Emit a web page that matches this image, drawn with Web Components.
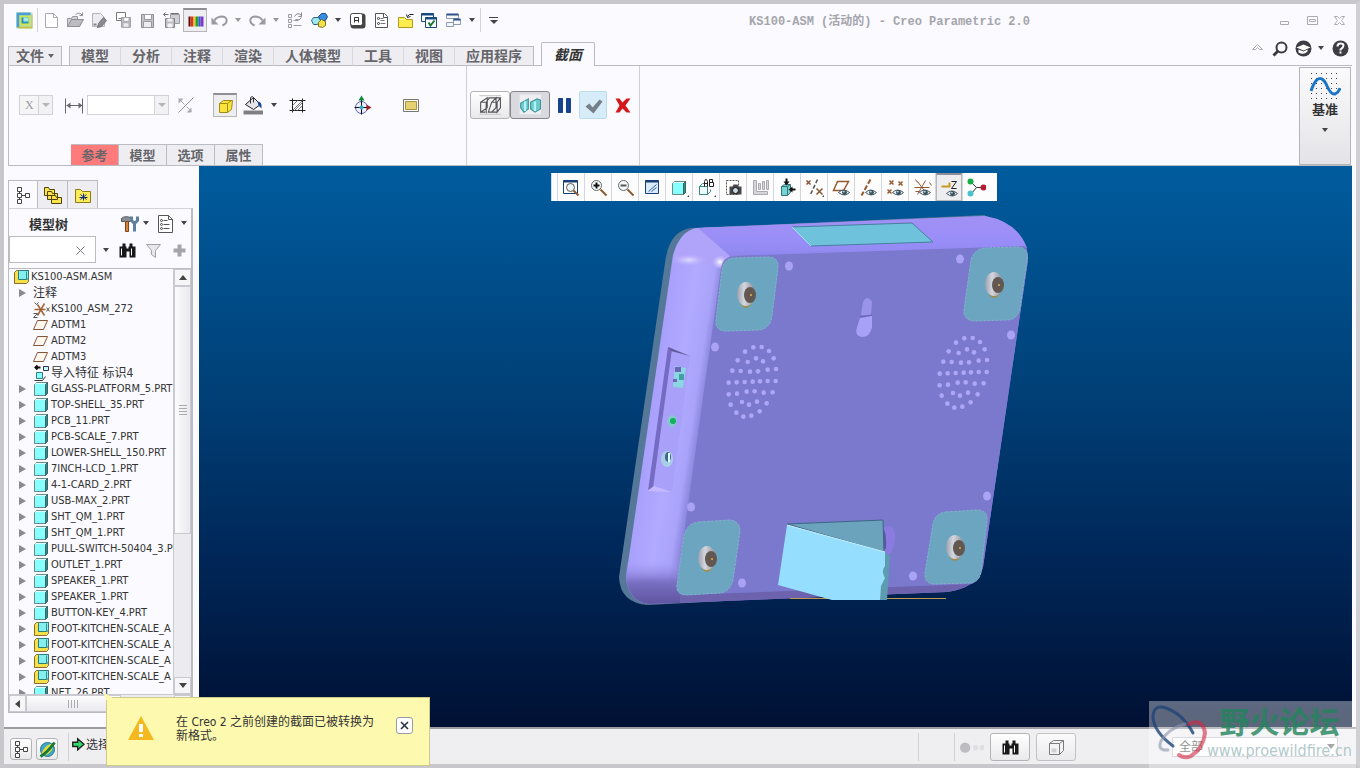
<!DOCTYPE html>
<html lang="zh-CN">
<head>
<meta charset="utf-8">
<title>KS100-ASM (活动的) - Creo Parametric 2.0</title>
<style>
    html, body { height: 100%; }
    body {
        margin: 0;
        overflow: hidden;
        font-family: "DejaVu Sans Condensed", "Noto Sans CJK SC", sans-serif;
        font-size: 11px;
        color: #333;
        --line: #bbbbc2;
        --panel: #fafaff;
        --tab: #eeeef2;
        --cjk: "Liberation Sans", "Noto Sans CJK SC", sans-serif;
    }
</style>
</head>
<body>
<app-window>
    <title-bar slot="title">KS100-ASM (活动的) - Creo Parametric 2.0</title-bar>
    <ribbon-tabs slot="tabs"></ribbon-tabs>
    <ribbon-panel slot="ribbon"></ribbon-panel>
    <model-panel slot="side">
        <tree-item icon="asm" level="0">KS100-ASM.ASM</tree-item>
        <tree-item icon="" level="1" open>注释</tree-item>
        <tree-item icon="csys">KS100_ASM_272</tree-item>
        <tree-item icon="plane">ADTM1</tree-item>
        <tree-item icon="plane">ADTM2</tree-item>
        <tree-item icon="plane">ADTM3</tree-item>
        <tree-item icon="import">导入特征 标识4</tree-item>
        <tree-item icon="part" open>GLASS-PLATFORM_5.PRT</tree-item>
        <tree-item icon="part" open>TOP-SHELL_35.PRT</tree-item>
        <tree-item icon="part" open>PCB_11.PRT</tree-item>
        <tree-item icon="part" open>PCB-SCALE_7.PRT</tree-item>
        <tree-item icon="part" open>LOWER-SHELL_150.PRT</tree-item>
        <tree-item icon="part" open>7INCH-LCD_1.PRT</tree-item>
        <tree-item icon="part" open>4-1-CARD_2.PRT</tree-item>
        <tree-item icon="part" open>USB-MAX_2.PRT</tree-item>
        <tree-item icon="part" open>SHT_QM_1.PRT</tree-item>
        <tree-item icon="part" open>SHT_QM_1.PRT</tree-item>
        <tree-item icon="part" open>PULL-SWITCH-50404_3.PRT</tree-item>
        <tree-item icon="part" open>OUTLET_1.PRT</tree-item>
        <tree-item icon="part" open>SPEAKER_1.PRT</tree-item>
        <tree-item icon="part" open>SPEAKER_1.PRT</tree-item>
        <tree-item icon="part" open>BUTTON-KEY_4.PRT</tree-item>
        <tree-item icon="asm" open>FOOT-KITCHEN-SCALE_A</tree-item>
        <tree-item icon="asm" open>FOOT-KITCHEN-SCALE_A</tree-item>
        <tree-item icon="asm" open>FOOT-KITCHEN-SCALE_A</tree-item>
        <tree-item icon="asm" open>FOOT-KITCHEN-SCALE_A</tree-item>
        <tree-item icon="part" open>NET_26.PRT</tree-item>
    </model-panel>
    <graphics-view slot="view"></graphics-view>
    <status-bar slot="status"></status-bar>
    <notify-balloon slot="over">在 Creo 2 之前创建的截面已被转换为新格式。</notify-balloon>
    <site-mark slot="over"></site-mark>
</app-window>

<script>
// Icon artwork, all on a 20x20 grid
const cube = (x, y) => `<path d="M${x} ${y + 2}l2-2h11v11l-2 2H${x}z" fill="#8ff" stroke="#6a8a8a"/><path d="M${x + 11} ${y + 2}l2-2v11l-2 2z" fill="#2f8f8f" stroke="#3b6464"/><path d="M${x + 1} ${y + 1}h10" stroke="#dff"/>`;
const eye = '<path d="M7 15q5-5 11 0q-5 5-11 0z" fill="#e8eef2" stroke="#4b5a63"/><circle cx="13" cy="15" r="2.4" fill="#35505c"/><circle cx="12.400" cy="14.300" r=".8" fill="#fff"/>';
const floppy = (x, y, s) => `<g transform="translate(${x} ${y}) scale(${s})"><path d="M0 0h12v13H0z" fill="#c4c4c8" stroke="#8d8d92"/><path d="M3 0h7v5H3z" fill="#fff" stroke="#9a9aa0"/><path d="M2 7h8v6H2z" fill="#ededf0" stroke="#9a9aa0"/></g>`;
const box = 'M3 6l4-3h10v10l-4 4H3zM3 6h10v11M13 6l4-3';

const ICONS = {
    app: '<path d="M2 2h16v16H2z" fill="#b9dcd0"/><path d="M2 2h14v3H5v12H2z" fill="#4a9fce"/><path d="M5 5h11v10H5z" fill="#c9e650"/><path d="M7 7h7v6H7z" fill="#2b93b4"/><path d="M9 7h5v4H9z" fill="#a6e8ed"/><path d="M4 16h13V4h1v14H4z" fill="#c3c440"/>',
    new: '<path d="M4 3h8l4 4v10H4z" fill="#fff" stroke="#aaaab0"/><path d="M12 3v4h4" fill="none" stroke="#aaaab0"/>',
    open: '<path d="M2 8h4l1-2h5v3h5l-3 7H2z" fill="#d2d2d6" stroke="#98989e"/><path d="M2 16l4-7h12l-4 7z" fill="#bcbcc1" stroke="#8e8e94"/><path d="M10 4q4-3 7 1m0-3v3h-3" fill="none" stroke="#8e8e94"/>',
    edit: '<path d="M3 3h8l4 4v9H3z" fill="#ececf0" stroke="#b4b4ba"/><path d="M4 14h3" stroke="#888" stroke-width="2"/><path d="M9 13l5-6 3 3-5 6-4 1z" fill="#8c8c92" stroke="#707076"/>',
    copy: '<path d="M3 2h9v8H3z" fill="#fff" stroke="#77777c"/><path d="M5 8h3v3" fill="none" stroke="#77777c"/>' + floppy(8, 7, .75),
    save: floppy(4, 4, 1),
    saveas: '<path d="M2 4h5M4 2l-2 2 2 2M9 3h8v3" fill="none" stroke="#6f6f75"/><path d="M9 4h9v9H9z" fill="#d0d0d4" stroke="#9a9aa0"/><path d="M4 8h9v9H4z" fill="#bdbdc2" stroke="#85858b"/><path d="M6 8h5v3H6zM6 13h5v4H6z" fill="#f4f4f6"/>',
    rainbow: '<path d="M3 5h2v10H3z" fill="#5a0d08"/><path d="M5 5h3v10H5z" fill="#d83422"/><path d="M8 5h2v10H8z" fill="#f0c41d"/><path d="M10 5h3v10h-3z" fill="#28a030"/><path d="M13 5h2v10h-2z" fill="#2c5be0"/><path d="M15 5h3v10h-3z" fill="#8338c8"/>',
    undo: '<path d="M5 10q2-4 8-4q5 1 4 5q0 2-4 4" fill="none" stroke="#9a9aa0" stroke-width="2"/><path d="M2 7v7h7z" fill="#9a9aa0"/>',
    redo: '<path d="M15 10q-2-4-8-4q-5 1-4 5q0 2 4 4" fill="none" stroke="#9a9aa0" stroke-width="2"/><path d="M18 7v7h-7z" fill="#9a9aa0"/>',
    regen: '<path d="M3 4h3v3H3zM3 9h3v3H3zM3 14h3v3H3zM8 10h5M8 15h8" fill="none" stroke="#9a9aa0"/><path d="M9 6q3-5 7-1m0-3v4h-3M16 7q-2 4-6 2" fill="none" stroke="#85858b"/>',
    colour: '<path d="M9 6l3-3h4l2 3-2 4h-5z" fill="#358ce0" stroke="#174c7d"/><path d="M2 10l2-3h5l2 3-3 4H4z" fill="#9ee8f0" stroke="#23667d"/><path d="M9 12l3-3 4 2v4l-3 2-4-1z" fill="#f2e24b" stroke="#827218"/>',
    apart: '<rect x="3" y="3" width="15" height="15" rx="3" fill="#444"/><rect x="3" y="3" width="12" height="12" rx="2" fill="#fff" stroke="#444"/><path d="M7 12V7h4v5M7 10h4" fill="none" stroke="#333"/>',
    list: '<path d="M4 3h9l3 3v11H4z" fill="#fff" stroke="#555"/><path d="M12 3v4h4" fill="none" stroke="#555"/><circle cx="7" cy="8" r="1" fill="none" stroke="#335"/><circle cx="7" cy="13" r="1" fill="none" stroke="#335"/><path d="M9 8h3M9 13h5M9 10h4" stroke="#777"/>',
    folder: '<path d="M3 7h6l2 2h6v8H3z" fill="#fdec50" stroke="#b39c19"/><path d="M4 9h5" stroke="#fffbb4"/><path d="M12 6q1-3 6-2M11 4l1 3 3-1" fill="none" stroke="#222"/>',
    windows: '<path d="M2 3h12v8H2z" fill="#fff" stroke="#174a80"/><path d="M2 4h12" stroke="#174a80" stroke-width="2"/><path d="M6 7h11v10H6z" fill="#fff" stroke="#174a80"/><path d="M6 8h11" stroke="#174a80" stroke-width="2"/><path d="M9 12l2 3 4-5" fill="none" stroke="#157733" stroke-width="2"/>',
    layout: '<path d="M3 4h12v4H3zM3 12h7v4H3zM10 9h7v5h-7z" fill="#f5f7fb" stroke="#8d9bb0"/><path d="M3 4h12M10 9h7" stroke="#2d5087" stroke-width="2"/>',
    min: '<path d="M5 11h8v3H5z" fill="#fff" stroke="#aaaab0"/>',
    max: '<path d="M5 6h10v8H5z" fill="#fff" stroke="#aaaab0"/><path d="M7 9h6v2H7z" fill="#fff" stroke="#aaaab0"/>',
    close: '<path d="M5 6h3l2 2 2-2h3l-3 4 3 4h-3l-2-2-2 2H5l3-4z" fill="#fff" stroke="#aaaab0"/>',
    chevron: '<path d="M5 11l5-5 5 5h-3l-2-2-2 2z" fill="#fff" stroke="#aaaab0"/>',
    search: '<circle cx="11" cy="9" r="5" fill="none" stroke="#3b3b40" stroke-width="2"/><path d="M8 12l-5 5" stroke="#3b3b40" stroke-width="3"/>',
    learn: '<circle cx="10" cy="10" r="8" fill="#3d3d43"/><path d="M3 9l7-3 7 3-7 3z" fill="#fff"/><path d="M5 11v3q5 3 9-1v-2l-4 2z" fill="#fff"/>',
    help: '<circle cx="10" cy="10" r="8" fill="#3d3d43"/><path d="M7 8q0-3 3-3t3 2q0 2-3 4v1" fill="none" stroke="#fff" stroke-width="2"/><path d="M9 13h2v2H9z" fill="#fff"/>',
    measure: '<path d="M1 3v15M18 3v15M2 10h16" stroke="#66666c" fill="none"/><path d="M2 10l4-3v6zM18 10l-4-3v6z" fill="#66666c"/>',
    flip: '<path d="M3 17L18 2" stroke="#8e8e94"/><path d="M3 8V3h5zM16 12v5h-5z" fill="#aaaab0"/><path d="M4 4l5 5M11 11l5 5" stroke="#aaaab0"/>',
    slab: '<path d="M4 7l4-3h9l-1 9-4 3H4z" fill="#f8e43b" stroke="#a38b19"/><path d="M4 7l8 0 4-3M12 7v9" fill="none" stroke="#a38b19"/>',
    paint: '<path d="M2 9l8-7 7 7-7 5z" fill="#e5e5ea" stroke="#222"/><path d="M7 8V2q2-2 3 0v5" fill="none" stroke="#333"/><path d="M14 6q5 0 4 7l-3-3z" fill="#174a9a"/><path d="M0 15h20v4H0z" fill="#808084"/>',
    hatch: '<path d="M5 3v14M15 3v14M2 5h16M2 15h16" stroke="#222"/><path d="M5 10l5-5M5 15L15 5M10 15l5-5M7 15l8-8" stroke="#777"/>',
    axes: '<circle cx="9" cy="12" r="6" fill="#eef" stroke="#5e63ac"/><path d="M9 2v17M2 12h14" stroke="#111"/><path d="M9 0l3 5H6z" fill="#0d8a37"/><path d="M19 12l-5-3v6z" fill="#9a2026"/><circle cx="9" cy="12" r="2" fill="#38a9c4"/>',
    rect: '<path d="M2 4h15v12H2z" fill="#fff" stroke="#777"/><path d="M4 6h11v8H4z" fill="#e6d171" stroke="#aa923a"/>',
    seca: '<path d="M0 1h20M0 18h20" stroke="#cdcdd2"/><path d="M1 7l6-4v9l-6 4zM1 7h5l3-4M6 7v10M8 16l3-9 4-4v9l-4 4zM11 7h5l3-4M16 7v9l3-4V3H8M1 16h4M11 16h5" fill="none" stroke="#55555a"/>',
    secb: '<path d="M0 0h20v18H0z" fill="#eeeef0"/><path d="M1 8l7-4v9l-4 3-3-4z" fill="#6ccbd0" stroke="#41979e"/><path d="M10 7l6-3 3 1v8l-5 3-4-3z" fill="#6ccbd0" stroke="#41979e"/><path d="M5 6v9M14 6v9" stroke="#b4f4f4" stroke-width="2"/>',
    pause: '<path d="M4 3h4v14H4zM12 3h4v14h-4z" fill="#17428c" stroke="#17428c"/>',
    check: '<path d="M2 11l4-3 3 4 7-8 3 2-9 12z" fill="#75808b"/>',
    cancel: '<path d="M3 3h4l3 4 4-4h4l-5 7 5 7h-4l-4-4-3 4H3l4-7z" fill="#d3191c"/>',
    tree: '<path d="M4 2h4v4H4zM4 8h4v4H4zM12 8h4v4h-4zM4 14h4v4H4zM6 6v2M6 12v2M8 10h4" fill="#fff" stroke="#444"/>',
    folders: '<path d="M1 2h4l1 2h5v6H1zM4 6h4l1 2h5v6H4zM8 10h4l1 2h5v6H8z" fill="#fbe44d" stroke="#4d450d"/>',
    star: '<path d="M2 4h5l2 2h8v11H2z" fill="#fdeb58" stroke="#8a7b17"/><path d="M10 8v7M7 9l6 5M13 9l-6 5M6 12h8" stroke="#102a87"/>',
    tools: '<path d="M2 5q3-3 9-1v4H8l-3 0H2z" fill="#888e96" stroke="#555"/><path d="M6 8h3v10H6z" fill="#d7833c" stroke="#81431b"/><path d="M12 3v4l2 2h2l2-2V3M15 8v10" fill="none" stroke="#5f7f9c" stroke-width="3"/>',
    tlist: '<path d="M3 2h10l4 4v13H3z" fill="#fff" stroke="#555"/><path d="M13 2v4h4M8 7h4M8 11h6M8 15h6" fill="none" stroke="#555"/><circle cx="6" cy="7" r="1" fill="none" stroke="#444"/><circle cx="6" cy="11" r="1" fill="none" stroke="#444"/><circle cx="6" cy="15" r="1" fill="none" stroke="#444"/>',
    find: '<path d="M2 6h3V3h3v3h1v2h2V6h1V3h3v3h3v11h-6v-6H9v6H2z" fill="#181818"/><path d="M4 8v7M14 8v7" stroke="#fff"/>',
    filter: '<path d="M3 4h14l-5 6v7l-4-3v-4z" fill="#e8e8ec" stroke="#a0a0a6"/>',
    plus: '<path d="M8 4h4v4h4v4h-4v4H8v-4H4V8h4z" fill="#a4a4aa"/>',
    x: '<path d="M6 6l8 8M14 6l-8 8" stroke="#77777c"/>',
    part: cube(2, 3),
    asm: '<path d="M2 5l2-2h12v11l-2 2H2z" fill="#f3e04a" stroke="#8d6b28"/><path d="M6 4l1-1h9v8l-2 1H6z" fill="#83efef" stroke="#2d7d7d"/><path d="M14 4v8" stroke="#2f8f8f"/>',
    plane: '<path d="M5 5h10l-4 9H1z" fill="#fff6ee" stroke="#85553a"/>',
    csys: '<path d="M2 10h11M5 5l7 11M12 4L5 16" stroke="#a16536" stroke-width="1.500"/><path d="M2 3l2 2 2-2M1 14h4l-4 4h4M14 8l3 4M17 8l-3 4" fill="none" stroke="#555"/>',
    import: '<path d="M11 3h5v4h-5z" fill="#c6fafa" stroke="#335"/><path d="M4 9h6v6H4z" fill="#8ff" stroke="#2d7d7d"/><path d="M2 17h8l3-4" fill="none" stroke="#333"/><path d="M3 4h5M5 2L3 4l2 2" fill="none" stroke="#111" stroke-width="2"/>',
    vfit: '<path d="M2 3h14v13H2z" fill="#fff" stroke="#163f78"/><path d="M2 4h14" stroke="#163f78" stroke-width="2"/><circle cx="9" cy="10" r="4" fill="#eef6fa" stroke="#555"/><path d="M12 13l5 5" stroke="#8c5930" stroke-width="2"/>',
    vin: '<circle cx="8" cy="8" r="5" fill="#f6fbfd" stroke="#666"/><path d="M5 8h6M8 5v6" stroke="#111" stroke-width="2"/><path d="M12 12l6 6" stroke="#8c5930" stroke-width="2"/>',
    vout: '<circle cx="8" cy="8" r="5" fill="#f6fbfd" stroke="#666"/><path d="M5 8h6" stroke="#555" stroke-width="2"/><path d="M12 12l6 6" stroke="#8c5930" stroke-width="2"/>',
    vpaint: '<path d="M3 3h13v13H3z" fill="#dcebfa" stroke="#163f78"/><path d="M3 4h13" stroke="#163f78" stroke-width="2"/><path d="M6 14l8-7M9 14l5-4" stroke="#305f9c"/>',
    vbox: cube(3, 4) + '<path d="M20 17v3h-3z" fill="#444"/>',
    vab: '<path d="M3 17V9l3-3h3M3 9h8v8H3zM11 17l3-3v-2" fill="#effcfc" stroke="#3c8787"/><path d="M8 9V4l1-2h1l1 2v5M8 6h3M13 2h3v3h-3zM13 5h4v4h-4z" fill="none" stroke="#222"/><path d="M20 17v3h-3z" fill="#444"/>',
    vcam: '<path d="M3 3h12v14H3z" fill="#fff" stroke="#555" stroke-dasharray="2 1"/><path d="M6 9h3l1-2h4l1 2h3v8H6z" fill="#47474b"/><circle cx="12" cy="13" r="3" fill="#c9d9e2" stroke="#111"/>',
    vbars: '<path d="M3 3v14h14v-3H6V3zM8 6h2v6H8zM12 4h2v8h-2zM16 3h2v9h-2z" fill="#d5d5da" stroke="#a9a9af"/>',
    vrot: '<path d="M4 9l3-2h6v8l-3 3H4z" fill="#75d3d3" stroke="#367575"/><path d="M4 9h6v9M10 9l3-2" fill="none" stroke="#367575"/><path d="M9 1v5M18 12h-5" stroke="#111" stroke-width="2"/><path d="M6 4h6L9 8zM15 9v6l-4-3z" fill="#111"/>',
    vx: '<path d="M2 3l4 4M6 3L2 7M12 11l6 6M18 11l-6 6" stroke="#8a5530" stroke-width="1.500"/><path d="M13 2L6 17" stroke="#555" stroke-width="1.500" stroke-dasharray="4 2"/><path d="M20 17v3h-3z" fill="#444"/>',
    vplane: '<path d="M6 4h11l-5 9H2z" fill="#fff" stroke="#955a32" stroke-width="1.500"/>' + eye,
    vaxis: '<path d="M12 2L3 18" stroke="#955a32" stroke-width="2" stroke-dasharray="5 2"/>' + eye,
    vpts: '<path d="M4 3l4 4M8 3L4 7M13 4l4 4M17 4l-4 4M2 12l4 4M6 12l-4 4" stroke="#955a32" stroke-width="1.500"/>' + eye,
    vcsys: '<path d="M2 10h15M5 4l9 12M13 3L5 17M3 2l2 3M17 5l2 3M3 14h4" stroke="#955a32"/>' + eye,
    vnote: '<path d="M2 8h8V4" fill="none" stroke="#c99a21" stroke-width="2"/><path d="M12 3h5l-5 7h5" fill="none" stroke="#222"/>' + eye,
    vspin: '<path d="M4 4l6 6h7M10 10l-5 6" fill="none" stroke="#333"/><circle cx="4" cy="4" r="3" fill="#16ad46"/><circle cx="17" cy="10" r="3" fill="#b91b33"/><circle cx="4" cy="16" r="3" fill="#4bc0d1"/>',
    globe: '<circle cx="10" cy="10" r="7" fill="#3fa9c7" stroke="#2a7283"/><path d="M4 14Q8 4 16 4q0 9-9 12z" fill="#e8d93d"/><path d="M3 17Q10 13 17 3" fill="none" stroke="#157a39" stroke-width="3"/>',
    go: '<path d="M2 7h7V2l9 8-9 8v-5H2z" fill="#33d96b" stroke="#222" stroke-width="2"/>',
    dots: '<circle cx="5" cy="10" r="4" fill="#bdbdc1"/><circle cx="13" cy="10" r="2" fill="#dedee2"/><circle cx="18" cy="10" r="2" fill="#dedee2"/>',
    wire: `<path d="${box}" fill="#f6f6f8" stroke="#555"/><path d="M5 11h5v4H5z" fill="#c6c6ca"/>`,
};

// Registers an element whose shadow root is cloned from the given markup.
// setup runs on connect and again when the icon name changes.
function define(tag, html, setup) {
    const template = document.createElement('template');
    template.innerHTML = html;
    customElements.define(tag, class extends HTMLElement {
        static get observedAttributes() { return ['name']; }
        constructor() {
            super();
            this.attachShadow({ mode: 'open' }).appendChild(template.content.cloneNode(true));
        }
        connectedCallback() {
            if (setup) setup(this, this.shadowRoot);
        }
        attributeChangedCallback() {
            if (setup && this.isConnected) setup(this, this.shadowRoot);
        }
    });
}

// the half-unit origin keeps one-pixel strokes sharp
define('ui-icon', `
    <style>
        :host { display: inline-block; flex: none; width: 20px; height: 20px; }
        svg { display: block; width: 100%; height: 100%; }
    </style>
    <svg viewBox="-.5 -.5 20 20" aria-hidden="true"></svg>
`, (el, root) => {
    root.querySelector('svg').innerHTML = ICONS[el.getAttribute('name')] || '';
});

define('tool-button', `
    <style>
        :host { display: block; flex: none; width: 24px; height: 24px; }
        button {
            display: flex; align-items: center; justify-content: center;
            box-sizing: border-box; width: 100%; height: 100%;
            margin: 0; padding: 0; border: 1px solid transparent; background: none;
        }
        ui-icon { width: var(--icon-size, 20px); height: var(--icon-size, 20px); }
        :host([pressed]) button {
            border-color: #b5b5ba; border-top: 2px solid #8f8f96; background: #eeeef1;
        }
        :host([raised]) button {
            border-color: #b4b4b8; border-radius: 3px;
            background: linear-gradient(#fff, #e9e9ec);
        }
        :host([raised][pressed]) button { border: 1px solid #85858b; background: #d9d9df; }
    </style>
    <button type="button"><ui-icon></ui-icon></button>
`, (el, root) => {
    root.querySelector('ui-icon').setAttribute('name', el.getAttribute('icon'));
    root.querySelector('button').setAttribute('aria-label', el.getAttribute('icon'));
});

define('drop-arrow', `
    <style>
        :host { display: flex; flex: none; width: 14px; height: 20px; }
        button { width: 100%; padding: 0; border: 0; background: none; display: flex; align-items: center; justify-content: center; }
        i { border: 3px solid transparent; border-top: 4px solid #444; border-bottom: 0; }
        :host([dim]) i { border-top-color: #999; }
    </style>
    <button type="button" aria-label="more"><i></i></button>
`);

define('app-window', `
    <style>
        :host {
            position: relative;
            display: flex; flex-direction: column;
            box-sizing: border-box; height: 100vh;
            border: 4px solid #c7c7cc;
            border-right-color: #cfcfd4;
            background: var(--panel);
            box-shadow: inset 1px 1px #fff;
        }
        main { display: flex; flex: 1; min-height: 0; padding: 0 4px; }
    </style>
    <slot name="title"></slot>
    <slot name="tabs"></slot>
    <slot name="ribbon"></slot>
    <main><slot name="side"></slot><slot name="view"></slot></main>
    <slot name="status"></slot>
    <slot name="over"></slot>
`);

define('title-bar', `
    <style>
        :host { display: flex; align-items: center; height: 32px; padding: 0 5px 0 8px; }
        .sep { width: 1px; height: 24px; margin: 0 1px; background: #d2d2d8; }
        h1 {
            flex: 1; margin: 0; text-align: center; white-space: nowrap;
            font: bold 12px "Liberation Mono", "Noto Sans CJK SC", monospace; color: #a5a5ab;
        }
        .more { border-top: 1px solid #444; width: 9px; margin: 0 8px 0 7px; display: flex; justify-content: center; padding-top: 2px; }
        .more i { border: 4px solid transparent; border-top-color: #444; border-bottom: 0; }
        .win { display: flex; gap: 3px; }
    </style>
    <tool-button icon="app"></tool-button>
    <span class="sep"></span>
    <tool-button icon="new"></tool-button>
    <tool-button icon="open"></tool-button>
    <tool-button icon="edit"></tool-button>
    <tool-button icon="copy"></tool-button>
    <tool-button icon="save"></tool-button>
    <tool-button icon="saveas"></tool-button>
    <tool-button icon="rainbow" pressed></tool-button>
    <tool-button icon="undo"></tool-button>
    <drop-arrow dim></drop-arrow>
    <tool-button icon="redo"></tool-button>
    <drop-arrow dim></drop-arrow>
    <tool-button icon="regen"></tool-button>
    <tool-button icon="colour"></tool-button>
    <drop-arrow></drop-arrow>
    <tool-button icon="apart"></tool-button>
    <tool-button icon="list"></tool-button>
    <tool-button icon="folder"></tool-button>
    <tool-button icon="windows"></tool-button>
    <tool-button icon="layout"></tool-button>
    <drop-arrow></drop-arrow>
    <span class="sep"></span>
    <span class="more"><i></i></span>
    <h1><slot></slot></h1>
    <div class="win">
        <tool-button icon="min"></tool-button>
        <tool-button icon="max"></tool-button>
        <tool-button icon="close"></tool-button>
    </div>
`);

define('ribbon-tabs', `
    <style>
        :host {
            display: flex; align-items: flex-end; height: 30px; padding: 0 4px;
            font-family: var(--cjk); font-size: 14px; font-weight: bold; color: #65656a;
        }
        button {
            box-sizing: border-box; height: 20px; padding: 0 11px;
            border: 1px solid #d8d8de; border-width: 1px 1px 1px 0; border-top-color: var(--line); border-bottom-color: var(--line);
            background: var(--tab); font: inherit; line-height: 18px; color: inherit; white-space: nowrap;
        }
        .file { display: flex; align-items: center; padding: 0 7px; border-color: var(--line); border-left-width: 1px; }
        .file i { margin-left: 4px; border: 3px solid transparent; border-top: 4px solid #65656a; border-bottom: 0; }
        .gap { width: 7px; height: 20px; box-sizing: border-box; border-bottom: 1px solid var(--line); }
        .first { border-left: 1px solid var(--line); }
        .last { border-right-color: var(--line); }
        .active {
            height: 24px; padding: 0 12px; color: #333; font-style: italic; line-height: 22px;
            border: 1px solid var(--line); border-bottom: 0; background: var(--panel); border-radius: 2px 2px 0 0;
        }
        .rest { display: flex; flex: 1; height: 29px; justify-content: flex-end; align-items: center; border-bottom: 1px solid var(--line); padding-right: 2px; gap: 3px; }
        .rest ui-icon { margin-bottom: 5px; }
        .rest drop-arrow { margin: 0 -1px 6px -2px; }
    </style>
    <button type="button" class="file">文件<i></i></button>
    <span class="gap"></span>
    <button type="button" class="first">模型</button>
    <button type="button">分析</button>
    <button type="button">注释</button>
    <button type="button">渲染</button>
    <button type="button">人体模型</button>
    <button type="button">工具</button>
    <button type="button">视图</button>
    <button type="button" class="last">应用程序</button>
    <span class="gap"></span>
    <button type="button" class="active">截面</button>
    <div class="rest">
        <ui-icon name="chevron"></ui-icon>
        <ui-icon name="search"></ui-icon>
        <ui-icon name="learn"></ui-icon>
        <drop-arrow></drop-arrow>
        <ui-icon name="help"></ui-icon>
    </div>
`);

define('ribbon-panel', `
    <style>
        :host {
            display: flex; height: 99px; margin: 0 4px;
            border-left: 1px solid var(--line); border-bottom: 1px solid var(--line);
            font-family: var(--cjk); font-weight: bold; color: #65656a;
        }
        .group { display: flex; flex-direction: column; border-right: 1px solid #d0d0d6; }
        .row { display: flex; align-items: center; height: 78px; }
        .tools { padding: 0 45px 0 10px; }
        select, .combo {
            display: flex; box-sizing: border-box; height: 20px; margin: 0; padding: 0;
            border: 1px solid #d2d2d8; background: #fff; border-radius: 0;
        }
        .axis { position: relative; width: 34px; margin-right: 11px; }
        .axis select {
            width: 100%; appearance: none; opacity: 1; padding-left: 5px;
            font: 12px "Liberation Serif", serif; color: #9a9aa0; background: #f5f5f8;
        }
        .axis i, .combo button { box-sizing: border-box; width: 14px; border: 0; border-left: 1px solid #d2d2d8; background: #f2f2f5; padding: 0; display: flex; align-items: center; justify-content: center; }
        .axis i { position: absolute; right: 1px; top: 1px; bottom: 1px; }
        .axis i::after, .combo button::after { content: ""; border: 4px solid transparent; border-top-color: #b5b5ba; border-bottom: 0; }
        .combo { width: 82px; margin: 0 6px 0 3px; }
        .combo input { flex: 1; min-width: 0; border: 0; padding: 0 4px; background: #fff; }
        .slab { margin: 0 6px 0 18px; }
        .hatch { margin: 0 43px 0 4px; }
        .axes { margin-right: 29px; }
        .paint { margin-right: 4px; }
        .tabs { display: flex; height: 21px; margin-left: 62px; }
        .tabs button {
            box-sizing: border-box; width: 48px; padding: 0; border: 1px solid var(--line); border-left-width: 0;
            border-bottom: 0; background: var(--tab); font: inherit; font-size: 13px; line-height: 19px; color: inherit;
        }
        .tabs .warn { background: #ff7b7b; }
        .confirm { padding: 0 7px 0 3px; }
        .confirm .wide { width: 40px; height: 28px; --icon-size: 22px; }
        .pause { margin: 0 5px 0 4px; }
        .ok { display: flex; align-items: center; justify-content: center; width: 28px; height: 28px; box-sizing: border-box; margin-right: 5px; padding: 0; border: 1px solid #b9dcec; border-radius: 2px; background: #d6ecf8; }
        .datum {
            display: flex; flex-direction: column; align-items: center; width: 52px; margin: 1px 1px 0 auto; padding: 4px 0 0;
            border: 1px solid #b4b4ba; background: linear-gradient(#fafafc, #e4e4e8); font: inherit; font-size: 13px; line-height: 16px; color: #333;
        }
        .datum svg { width: 32px; height: 30px; }
        .datum drop-arrow { margin-top: 2px; }
    </style>
    <div class="group">
        <div class="row tools">
            <span class="axis"><select disabled aria-label="axis"><option>X</option></select><i></i></span>
            <ui-icon name="measure"></ui-icon>
            <span class="combo"><input type="text" aria-label="offset"><button type="button" aria-label="list"></button></span>
            <ui-icon name="flip"></ui-icon>
            <tool-button class="slab" icon="slab" pressed></tool-button>
            <ui-icon name="paint" class="paint"></ui-icon>
            <drop-arrow></drop-arrow>
            <tool-button icon="hatch" class="hatch"></tool-button>
            <ui-icon name="axes" class="axes"></ui-icon>
            <ui-icon name="rect"></ui-icon>
        </div>
        <div class="tabs">
            <button type="button" class="warn">参考</button>
            <button type="button">模型</button>
            <button type="button">选项</button>
            <button type="button">属性</button>
        </div>
    </div>
    <div class="group">
        <div class="row confirm">
            <tool-button class="wide" icon="seca" raised></tool-button>
            <tool-button class="wide" icon="secb" raised pressed></tool-button>
            <ui-icon name="pause" class="pause"></ui-icon>
            <button type="button" class="ok" aria-label="ok"><ui-icon name="check"></ui-icon></button>
            <ui-icon name="cancel"></ui-icon>
        </div>
    </div>
    <button type="button" class="datum">
        <svg viewBox="0 0 32 30"><g class="grid"></g><path d="M2 19Q7 4 13 7q3 2 5 7q4 9 8 8q4-2 5-6" fill="none" stroke="#1c74c4" stroke-width="3"/></svg>
        <span>基准</span>
        <drop-arrow></drop-arrow>
    </button>
`, (el, root) => {
    let dots = '';
    for (let y = 1; y < 30; y += 5) {
        for (let x = 2; x < 32; x += 5) dots += `<rect x="${x}" y="${y}" width="1" height="1" fill="#444"/>`;
    }
    root.querySelector('.grid').innerHTML = dots;
});

define('tree-item', `
    <style>
        :host { display: flex; align-items: center; height: 16px; padding-left: 10px; white-space: nowrap; line-height: 16px; }
        i { flex: none; width: 0; height: 0; border: 4px solid transparent; border-left: 7px solid #8a8a8f; border-right: 0; margin-right: 6px; visibility: hidden; }
        :host([open]) i { visibility: visible; }
        :host([level="0"]) { padding-left: 3px; }
        :host([level="0"]) i, :host([level="1"]) ui-icon { display: none; }
        ui-icon { margin: -2px -2px -2px 0; }
        .label { padding-left: 1px; font-family: "DejaVu Sans Condensed", "Noto Sans CJK SC", sans-serif; }
        .cjk { font-size: 12px; }
    </style>
    <i></i><ui-icon></ui-icon><span class="label"><slot></slot></span>
`, (el, root) => {
    root.querySelector('ui-icon').setAttribute('name', el.getAttribute('icon'));
    if (/[\u4e00-\u9fff]/.test(el.textContent)) root.querySelector('.label').classList.add('cjk');
});

define('model-panel', `
    <style>
        :host { display: flex; flex-direction: column; width: 191px; flex: none; padding: 14px 0 14px; box-sizing: border-box; }
        .tabs { display: flex; }
        .tabs button {
            display: flex; align-items: center; justify-content: center; box-sizing: border-box; width: 30px; height: 28px; padding: 0;
            border: 1px solid var(--line); border-left-width: 0; border-bottom: 0; background: var(--tab);
        }
        .tabs .on { background: var(--panel); border-left-width: 1px; }
        .body { display: flex; flex-direction: column; flex: 1; min-height: 0; width: 185px; box-sizing: border-box; border: 1px solid var(--line); border-right-width: 2px; border-top-color: #d3d3d9; }
        .head, .find { display: flex; align-items: center; }
        .head { height: 28px; padding-left: 20px; }
        h2 { flex: 1; margin: 0; font: bold 13px var(--cjk); color: #333; }
        .find { height: 25px; margin-bottom: 6px; }
        .box { display: flex; align-items: center; box-sizing: border-box; width: 87px; height: 27px; border: 1px solid var(--line); background: #fff; padding-right: 5px; }
        .box input { flex: 1; min-width: 0; border: 0; outline: 0; background: none; }
        .find > drop-arrow { margin: 0 4px 0 3px; }
        .find > .gap { margin: 0 6px; }
        .tree { display: flex; flex: 1; min-height: 0; border-top: 1px solid var(--line); }
        .items { flex: 1; min-width: 0; overflow: hidden; }
        .bar { display: flex; background: #ececf0; }
        .bar button { flex: none; display: flex; align-items: center; justify-content: center; width: 17px; height: 17px; padding: 0; border: 1px solid #c9c9cf; background: #f6f6f9; box-sizing: border-box; }
        .bar button::after { content: ""; border: 4px solid transparent; }
        .up::after { border-bottom: 5px solid #444 !important; border-top: 0 !important; }
        .down::after { border-top: 5px solid #444 !important; border-bottom: 0 !important; }
        .left::after { border-right: 5px solid #444 !important; border-left: 0 !important; }
        .right::after { border-left: 5px solid #444 !important; border-right: 0 !important; }
        .vert { flex-direction: column; width: 17px; border-left: 1px solid #c9c9cf; }
        .thumb { display: flex; align-items: center; justify-content: center; box-sizing: border-box; border: 1px solid #c9c9cf; background: linear-gradient(90deg, #fcfcfe, #e9e9ee); }
        .vert .thumb { flex: 62; }
        .vert .space { flex: 36; }
        .vert .thumb::after { content: ""; width: 8px; height: 10px; background: repeating-linear-gradient(#aaaab0 0 1px, transparent 1px 3px); }
        .hor { height: 17px; border-top: 1px solid #c9c9cf; }
        .hor .thumb { width: 95px; background: linear-gradient(#fcfcfe, #e9e9ee); }
        .hor .thumb::after { content: ""; width: 11px; height: 8px; background: repeating-linear-gradient(90deg, #aaaab0 0 1px, transparent 1px 3px); }
        .hor .space { flex: 1; }
    </style>
    <div class="tabs">
        <button type="button" class="on" aria-label="tree"><ui-icon name="tree"></ui-icon></button>
        <button type="button" aria-label="folders"><ui-icon name="folders"></ui-icon></button>
        <button type="button" aria-label="favorites"><ui-icon name="star"></ui-icon></button>
    </div>
    <div class="body">
        <div class="head">
            <h2>模型树</h2>
            <ui-icon name="tools"></ui-icon><drop-arrow></drop-arrow>
            <tool-button icon="tlist"></tool-button><drop-arrow></drop-arrow>
        </div>
        <div class="find">
            <span class="box"><input type="text" aria-label="find"><ui-icon name="x"></ui-icon></span>
            <drop-arrow></drop-arrow>
            <ui-icon name="find"></ui-icon>
            <ui-icon name="filter" class="gap"></ui-icon>
            <ui-icon name="plus"></ui-icon>
        </div>
        <div class="tree">
            <div class="items"><slot></slot></div>
            <div class="bar vert">
                <button type="button" class="up" aria-label="up"></button>
                <span class="thumb"></span><span class="space"></span>
                <button type="button" class="down" aria-label="down"></button>
            </div>
        </div>
        <div class="bar hor">
            <button type="button" class="left" aria-label="left"></button>
            <span class="thumb"></span><span class="space"></span>
            <button type="button" class="right" aria-label="right"></button>
        </div>
    </div>
`);

define('view-toolbar', `
    <style>
        :host { display: flex; height: 28px; padding: 0 8px 0 5px; box-sizing: border-box; background: #fdfdfe; border-left: 1px solid #cde; }
        tool-button { width: 27px; height: 28px; box-sizing: border-box; border-left: 1px solid #d3d6dc; }
    </style>
`, (el, root) => {
    for (const name of ['vfit', 'vin', 'vout', 'vpaint', 'vbox', 'vab', 'vcam', 'vbars', 'vrot', 'vx', 'vplane', 'vaxis', 'vpts', 'vcsys', 'vnote', 'vspin']) {
        const b = document.createElement('tool-button');
        b.setAttribute('icon', name);
        if (name === 'vnote') b.setAttribute('pressed', '');
        root.appendChild(b);
    }
});

define('graphics-view', `
    <style>
        :host {
            position: relative; flex: 1; min-width: 0; display: flex; justify-content: center; align-items: flex-start;
            padding-top: 7px; padding-right: 4px; box-sizing: border-box;
            background: linear-gradient(#005c9e, #004077 40%, #00285a 68%, #001033);
        }
        svg { position: absolute; left: 0; top: 0; width: 100%; height: 100%; }
        view-toolbar { position: relative; }
    </style>
    <svg viewBox="199 166 1153 561" preserveAspectRatio="xMidYMid slice">
        <defs>
            <linearGradient id="side" gradientUnits="userSpaceOnUse" x1="646" y1="400" x2="706" y2="409">
                <stop offset="0" stop-color="#a69dfb"/><stop offset=".5" stop-color="#b1aaff"/><stop offset=".8" stop-color="#a9a3fa"/><stop offset="1" stop-color="#7f7cd2"/>
            </linearGradient>
            <linearGradient id="top" x1="0" y1="0" x2="0" y2="1">
                <stop offset="0" stop-color="#a191f5"/><stop offset=".6" stop-color="#988df8"/><stop offset="1" stop-color="#8a83e6"/>
            </linearGradient>
            <linearGradient id="low" x1="0" y1="0" x2="0" y2="1">
                <stop offset="0" stop-color="#a69dfb" stop-opacity="0"/><stop offset=".5" stop-color="#7a70c4"/><stop offset="1" stop-color="#5e549f"/>
            </linearGradient>
            <radialGradient id="shine"><stop offset="0" stop-color="#fff"/><stop offset="1" stop-color="#c9beff" stop-opacity="0"/></radialGradient>
            <linearGradient id="metal"><stop offset="0" stop-color="#9aa1ae"/><stop offset=".4" stop-color="#d4d7df"/><stop offset="1" stop-color="#8a8b98"/></linearGradient>
        </defs>
        <!-- back shell and body -->
        <path d="M692 228L985 215L990 400L800 597L648 605Q620 603 619 577L665 263Q669 230 692 228z" fill="#557899"/>
        <path d="M698 228L985 216Q1018 222 1027 250L1028 260L983 567Q977 588 947 592L648 604Q628 601 626 577L673 255Q680 230 698 228z" fill="url(#side)"/>
        <path d="M698 228L985 216Q1018 222 1027 248L733 256L716 262z" fill="url(#top)"/>
        <path d="M698 228Q680 230 673 258L721 268L730 256z" fill="#b0a3fa"/>
        <ellipse cx="689" cy="260" rx="18" ry="6" fill="url(#shine)" opacity=".6"/>
        <ellipse cx="720" cy="262" rx="8" ry="7" fill="url(#shine)"/>
        <path d="M676 592L983 567Q977 588 947 592L676 603z" fill="#6c62ae"/>
        <path d="M627 562L680 560V603L648 604Q628 601 626 577z" fill="url(#low)"/>
        <path d="M733 256L1025 246Q1028 250 1028 260L983 567Q980 580 972 584L684 595Q676 595 677 585L721 268Q723 257 733 256z" fill="#7b79cd"/>
        <path d="M792 227L912 223L933 242L811 246z" fill="#6fc2dc" stroke="#487f9e"/>
        <path d="M792 227L811 246" stroke="#9ee5f2"/>
        <!-- foot pads -->
        <g fill="#6ca5bf" stroke="#7fb2cb" stroke-dasharray="3 1">
            <path d="M735 258L768 257Q779 257 778 268L772 316Q770 329 759 330L726 331Q715 331 716 320L722 270Q724 258 735 258z"/>
            <path d="M985 248L1018 247Q1029 248 1027 260L1020 308Q1018 320 1006 320L974 321Q963 320 964 310L971 260Q974 249 985 248z"/>
            <path d="M699 522L730 520Q740 521 740 531L733 580Q730 592 720 593L687 595Q676 595 677 585L684 536Q687 523 699 522z"/>
            <path d="M946 512L977 510Q988 510 987 521L981 572Q979 583 969 583L935 584Q924 584 925 573L933 524Q935 513 946 512z"/>
        </g>
        <g class="knobs"></g>
        <g class="screws" fill="#aaa3f5"></g>
        <g class="holes" fill="#aea7f8"></g>
        <!-- keyhole -->
        <path d="M861 315L863 302Q867 294 872 302L871 316z" fill="#9a93ea"/>
        <path d="M860 318L872 316V327Q870 337 862 337Q854 336 857 327z" fill="#a8a1f8"/>
        <path d="M860 317L872 315" stroke="#6360a8"/>
        <!-- side connectors -->
        <path d="M668 347L690 356L672 492L648 490z" fill="#a8a0f9"/>
        <path d="M668 347L672 349L653 488L648 491z" fill="#756bc2"/>
        <path d="M668 347L690 356L671 351z" fill="#625a9d"/>
        <path d="M647 491L654 486L672 492z" fill="#c4b9ff"/>
        <path d="M675 366L686 368L683 388L673 387z" fill="#8cd6e2"/>
        <path d="M675 367h6v5h-6zM673 379h4v3h-4z" fill="#6b66b5"/>
        <path d="M679 374h5v6h-5z" fill="#419fa6"/>
        <ellipse cx="672" cy="421" rx="5" ry="6" fill="#8ac5d4"/><circle cx="673" cy="421" r="3" fill="#12b35c"/>
        <ellipse cx="667" cy="459" rx="6" ry="8" fill="#a9cfe6"/><ellipse cx="668" cy="457" rx="3" ry="5" fill="#44658c"/><path d="M669 453v9" stroke="#dff" stroke-width="2"/>
        <!-- stand -->
        <path d="M790 598.500H946" stroke="#c29a4b"/>
        <path d="M883 528Q896 522 895 540Q892 556 884 558z" fill="#8b7be0"/><path d="M883 528Q887 534 886 548L883 552z" fill="#5d55a2"/>
        <path d="M787 524L883 520L884 552z" fill="#6ba3bd" stroke="#3b6785"/>
        <path d="M885 552L890 556L887 600L878 600z" fill="#5d9cb0"/>
        <path d="M787 525L885 552L885 566Q881 571 885 578L881 586L880 600H832L778 585z" fill="#95defe"/>
        <path d="M787 525L885 552" stroke="#c5f1ff"/>
    </svg>
    <view-toolbar></view-toolbar>
`, (el, root) => {
    const knobs = [[747, 294], [995, 284], [708, 558], [956, 547]];
    root.querySelector('.knobs').innerHTML = knobs.map(([x, y]) => `
        <ellipse cx="${x - 1}" cy="${y + 3}" rx="7" ry="11" fill="#a08e4c"/>
        <ellipse cx="${x - 1}" cy="${y}" rx="9" ry="12" fill="url(#metal)"/>
        <ellipse cx="${x + 3}" cy="${y + 1}" rx="6" ry="8" fill="#625851"/>
        <circle cx="${x + 4}" cy="${y + 1}" r="1" fill="#e3b04a"/>`).join('');

    const screws = [[789, 266], [960, 259], [1011, 335], [715, 347], [691, 507], [742, 583], [913, 576], [987, 496]];
    root.querySelector('.screws').innerHTML = screws.map(([x, y]) => `<ellipse cx="${x}" cy="${y}" rx="4" ry="4.500"/>`).join('');

    // speaker grille, repeated for both sides
    const holes = [[460, 442], [485, 441], [435, 455], [507, 453], [413, 481], [443, 486], [468, 475], [489, 484], [521, 475],
        [397, 512], [422, 513], [450, 515], [474, 514], [503, 509], [528, 507],
        [386, 548], [410, 547], [434, 546], [458, 545], [480, 544], [503, 543], [527, 543],
        [386, 583], [411, 581], [440, 575], [464, 574], [491, 578], [518, 577],
        [392, 614], [426, 606], [447, 614], [471, 605], [500, 610], [409, 638], [430, 650], [454, 647], [479, 634]];
    root.querySelector('.holes').innerHTML = [[600, 200], [811, 191]].map(([dx, dy]) =>
        holes.map(([x, y]) => `<circle cx="${dx + x / 3}" cy="${dy + y / 3}" r="2.300"/>`).join('')).join('');
});

define('status-bar', `
    <style>
        :host {
            display: flex; align-items: center; flex: none; height: 37px; box-sizing: border-box; padding: 0 18px 0 6px;
            border-top: 2px solid #9c9ca2; background: #efeff2;
        }
        .small { width: 22px; height: 22px; margin: 4px 4px 0 0; border: 0; }
        .sep { width: 1px; height: 28px; background: #d0d0d6; }
        .msg { display: flex; align-items: center; flex: 1; margin: 0 0 6px 2px; font: 12px var(--cjk); color: #333; }
        .msg ui-icon { width: 14px; height: 14px; margin-right: 1px; }
        .first { margin-left: 6px; }
        .wide { margin-right: 35px; }
        .find { width: 40px; height: 28px; margin-left: 2px; }
        .find + .find { margin: 0 96px 0 6px; opacity: .75; }
        .pick { position: relative; display: flex; }
        select { width: 166px; height: 20px; padding: 0 6px; border: 1px solid #c9c9cf; background: #fff; appearance: none; font: 12px var(--cjk); color: #555; border-radius: 0; }
        .pick i { position: absolute; right: 3px; top: 7px; border: 4px solid transparent; border-top: 5px solid #777; border-bottom: 0; }
        .dots { margin: 0 4px 0 3px; width: 26px; height: 26px; }
    </style>
    <tool-button class="small" icon="tree" raised></tool-button>
    <tool-button class="small" icon="globe" raised></tool-button>
    <span class="sep first"></span>
    <div class="msg"><ui-icon name="go"></ui-icon>选择</div>
    <span class="sep wide"></span>
    <span class="sep"></span>
    <ui-icon class="dots" name="dots"></ui-icon>
    <tool-button class="find" icon="find" raised></tool-button>
    <tool-button class="find" icon="wire" raised></tool-button>
    <span class="pick"><select aria-label="filter"><option>全部</option></select><i></i></span>
`);

define('notify-balloon', `
    <style>
        :host {
            position: absolute; left: 102px; bottom: -2px; width: 324px; height: 69px; box-sizing: border-box;
            display: flex; align-items: flex-start; padding: 17px 16px 0 20px;
            border: 1px solid #cfcb8c; background: #fdf9ae;
        }
        .tail { position: absolute; left: -5px; top: -6px; width: 22px; height: 8px; }
        .warn { width: 28px; height: 26px; flex: none; margin-right: 21px; }
        p { flex: none; width: 204px; margin: 0; font: 12px "DejaVu Sans Condensed", "Noto Sans CJK SC", sans-serif; line-height: 14px; color: #333; }
        button { margin: 2px 0 0 auto; width: 17px; height: 17px; padding: 0; border: 1px solid #99a; border-radius: 3px; background: #fff; display: flex; align-items: center; justify-content: center; }
        button svg { width: 9px; height: 9px; }
    </style>
    <svg class="tail" viewBox="0 0 22 8"><path d="M1 0L14 8H4z" fill="#fdf9ae"/></svg>
    <svg class="warn" viewBox="0 0 28 26"><path d="M14 1L27 25H1z" fill="#f3b91f"/><path d="M12 9h4v8h-4zM12 19h4v3h-4z" fill="#fff"/></svg>
    <p><slot></slot></p>
    <button type="button" aria-label="close"><svg viewBox="0 0 9 9"><path d="M1 1l7 7M8 1l-7 7" stroke="#222c44" stroke-width="1.500"/></svg></button>
`);

define('site-mark', `
    <style>
        :host {
            position: absolute; right: 0; bottom: -4px; width: 207px; height: 67px; pointer-events: none;
            background: rgba(255, 255, 255, .36); display: flex; box-sizing: border-box;
        }
        svg { width: 58px; height: 62px; flex: none; }
        div { display: flex; flex-direction: column; align-items: center; white-space: nowrap; }
        b { font: bold 30px "Noto Sans CJK SC", sans-serif; line-height: 38px; color: #23845d; opacity: .8; }
        span { font: 16px "DejaVu Sans Condensed", sans-serif; line-height: 24px; color: #9fbdbf; opacity: .8; }
    </style>
    <svg viewBox="0 0 58 62"><g fill="none" stroke-linecap="round">
        <path d="M24 45Q4 30 4 15Q5 3 17 7Q34 13 44 32" stroke="#1f4476" stroke-width="3" opacity=".8"/>
        <path d="M40 23Q54 17 56 32Q54 48 42 55Q36 58 30 54" stroke="#d2263f" stroke-width="4" opacity=".6"/>
        <path d="M36 23Q20 27 12 40Q8 50 19 49" stroke="#8a95ac" stroke-width="3" opacity=".6"/>
    </g></svg>
    <div><b>野火论坛</b><span>www.proewildfire.cn</span></div>
`);
</script>
</body>
</html>
